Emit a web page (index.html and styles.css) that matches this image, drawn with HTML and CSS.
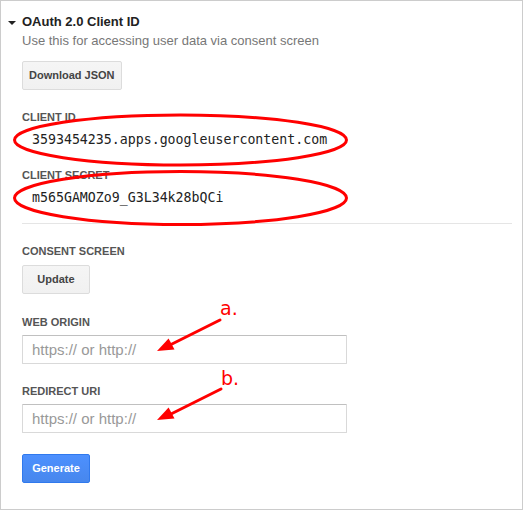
FILE: index.html
```html
<!DOCTYPE html>
<html>
<head>
<meta charset="utf-8">
<link rel="stylesheet" href="styles.css">
</head>
<body>
<div class="panel">
  <div class="header">
    <span class="caret"></span>
    <span class="title">OAuth 2.0 Client ID</span>
  </div>
  <div class="subtitle">Use this for accessing user data via consent screen</div>
  <div class="btn btn-dl">Download JSON</div>

  <div class="label label-first">CLIENT ID</div>
  <div class="value">3593454235.apps.googleusercontent.com</div>
  <div class="label label-next">CLIENT SECRET</div>
  <div class="value">m565GAMOZo9_G3L34k28bQCi</div>

  <div class="divider"></div>

  <div class="label label-section">CONSENT SCREEN</div>
  <div class="btn btn-update">Update</div>

  <div class="label label-section">WEB ORIGIN</div>
  <input class="field" type="text" placeholder="https:// or http://">

  <div class="label label-next2">REDIRECT URI</div>
  <input class="field" type="text" placeholder="https:// or http://">

  <div class="btn btn-primary">Generate</div>

  <svg class="annot" width="523" height="513" viewBox="0 0 523 513">
    <ellipse cx="180.5" cy="140" rx="166" ry="25" fill="none" stroke="#ff0000" stroke-width="3"/>
    <ellipse cx="180.5" cy="198" rx="166" ry="26.5" fill="none" stroke="#ff0000" stroke-width="3"/>
    <text class="note" x="220" y="315">a.</text>
    <line x1="220" y1="320" x2="168" y2="346" stroke="#ff0000" stroke-width="3" stroke-linecap="round"/>
    <polygon points="157,351 168.6,338.5 174.5,349.5" fill="#ff0000"/>
    <text class="note" x="221" y="384.5">b.</text>
    <line x1="221" y1="389" x2="169" y2="415" stroke="#ff0000" stroke-width="3" stroke-linecap="round"/>
    <polygon points="157,420 168.6,407.5 174.5,418.5" fill="#ff0000"/>
  </svg>
</div>
</body>
</html>
```

FILE: styles.css
```css
html, body {
  margin: 0;
  padding: 0;
  background: #fff;
}

.panel {
  position: relative;
  box-sizing: border-box;
  width: 523px;
  height: 510px;
  border: 1px solid #cccccc;
  padding: 13px 10px 0 21px;
  font-family: "Liberation Sans", Arial, sans-serif;
  color: #222;
}

.header {
  display: flex;
  align-items: center;
  margin-left: -14px;
  gap: 6px;
  height: 16px;
}

.caret {
  width: 0;
  height: 0;
  border-left: 4px solid transparent;
  border-right: 4px solid transparent;
  border-top: 4px solid #222;
  margin-top: 1px;
}

.title {
  font-size: 13px;
  font-weight: bold;
  line-height: 16px;
  color: #222;
}

.subtitle {
  margin-top: 2px;
  font-size: 13px;
  line-height: 17px;
  color: #777;
}

.btn {
  display: inline-block;
  box-sizing: border-box;
  height: 29px;
  min-width: 68px;
  padding: 0 7px 1px;
  border: 1px solid #dcdcdc;
  border-radius: 2px;
  background: linear-gradient(#f5f5f5, #f1f1f1);
  color: #444;
  font-size: 11px;
  font-weight: bold;
  line-height: 26px;
  text-align: center;
}

.btn-dl {
  display: block;
  width: max-content;
  margin-top: 12px;
  padding: 0 6px 1px;
}

.btn-update {
  display: block;
  width: 68px;
  margin-top: 7px;
}

.btn-primary {
  display: block;
  width: 68px;
  margin-top: 21px;
  background: linear-gradient(#4d90fe, #4787ed);
  border-color: #3079ed;
  color: #fff;
}

.label {
  font-size: 11px;
  font-weight: bold;
  line-height: 14px;
  color: #555;
}

.label-first { margin-top: 20px; }
.label-next { margin-top: 19px; }
.label-section { margin-top: 21px; }
.label-next2 { margin-top: 20px; }

.divider + .label-section { margin-top: 20px; }

.value {
  margin-top: 7px;
  padding-left: 10px;
  font-family: "DejaVu Sans Mono", monospace;
  font-size: 13.25px;
  line-height: 18px;
  color: #222;
}

.divider {
  margin-top: 16px;
  height: 1px;
  background: #e5e5e5;
}

.field {
  display: block;
  box-sizing: border-box;
  width: 325px;
  height: 29px;
  margin: 6px 0 0;
  padding: 0 9px;
  border: 1px solid #d9d9d9;
  border-top-color: #c0c0c0;
  border-radius: 1px;
  font-family: "Liberation Sans", Arial, sans-serif;
  font-size: 15px;
  color: #222;
  outline: none;
}

.field::placeholder {
  color: #999;
}

.annot {
  position: absolute;
  left: -1px;
  top: -1px;
  pointer-events: none;
}

.note {
  font-family: "DejaVu Sans", sans-serif;
  font-size: 19px;
  fill: #ff0000;
}
```
